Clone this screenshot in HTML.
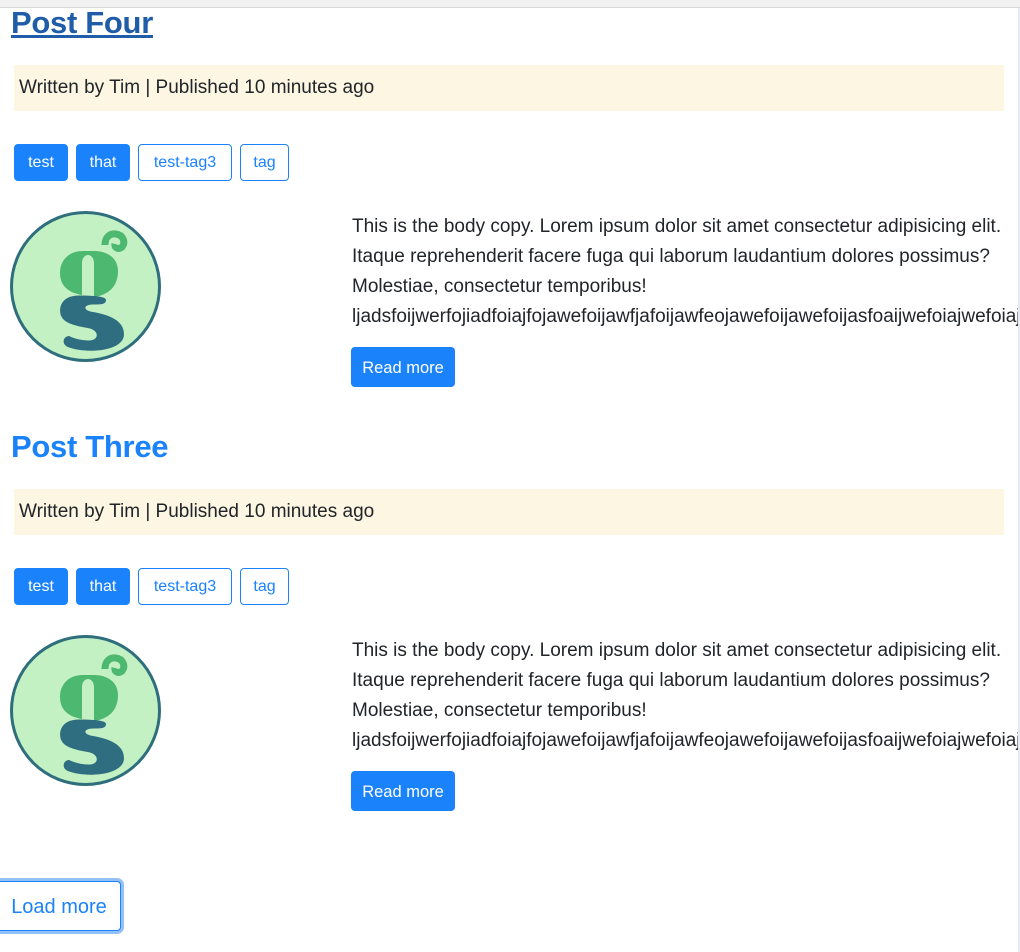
<!DOCTYPE html>
<html><head><style>
body{margin:0;width:1020px;height:952px;overflow:hidden;background:#fff;font-family:"Liberation Sans",sans-serif;color:#212529;position:relative}
.topbar{position:absolute;left:0;top:0;width:1020px;height:7px;background:#f1f1f1;border-bottom:1px solid #d8d8d8}
.rline{position:absolute;left:1018px;top:8px;width:2px;height:944px;background:#e3ecf4}
.post{position:absolute;left:0;width:1018px;height:424px}
h2{position:absolute;left:11px;top:4px;margin:0;font-size:31px;font-weight:bold;color:#1a82fb;line-height:38px;letter-spacing:-0.3px}
h2.u{color:#1f5da8;text-decoration:underline;text-decoration-thickness:3px}
.meta{position:absolute;left:14px;top:65px;width:985px;height:46px;background:#fcf6e3;font-size:19px;line-height:46px;padding-left:5px}
.tag{position:absolute;top:144px;height:37px;box-sizing:border-box;border-radius:4px;font-size:16px;line-height:35px;text-align:center;border:1px solid #1a82fb}
.f{background:#1a82fb;color:#fff}.o{background:#fff;color:#1a82fb}
.img{position:absolute;left:10px;top:211px}
.body{position:absolute;left:352px;top:212px;font-size:19px;line-height:30px;white-space:nowrap;width:666px;overflow:hidden}
.btn{position:absolute;left:351px;top:347px;width:104px;height:40px;background:#1a82fb;color:#fff;border-radius:4px;font-size:16.5px;line-height:42px;text-align:center}
.load{position:absolute;left:-3px;top:881px;width:122px;height:48px;border:1px solid #1a82fb;box-shadow:0 0 0 3px #94c0fa;border-radius:4px;color:#1a82fb;font-size:20px;line-height:50px;text-align:center;background:#fff}
</style></head><body>
<div class="topbar"></div><div class="rline"></div>

<div class="post" style="top:0">
<h2 class="u">Post Four</h2>
<div class="meta">Written by Tim | Published 10 minutes ago</div>
<div class="tag f" style="left:14px;width:54px">test</div>
<div class="tag f" style="left:76px;width:54px">that</div>
<div class="tag o" style="left:138px;width:94px">test-tag3</div>
<div class="tag o" style="left:240px;width:49px">tag</div>
<svg class="img" width="151" height="151" viewBox="0 0 151 151"><circle cx="75.5" cy="75.5" r="74" fill="#c4f1c3" stroke="#2f6f7d" stroke-width="3"/><path d="M73 40C58 40 50 50 50 62c0 14 10 20 22 22V52c0-5 3-8 6-8s6 3 6 8v34c14-2 24-10 24-26 0-14-12-20-24-20z" fill="#4db870"/><path d="M95 34c0-8 5-12 11-11 7 1 10 8 6 13-3 3-8 1-7-3" fill="none" stroke="#4db870" stroke-width="7"/><path transform="translate(6,8) scale(0.9)" d="M70 85c-15 0-21 8-21 17 0 12 12 16 30 19 14 2 14 14 2 14-8 0-16-2-22-5-6 0-9 8-2 12 18 8 63 6 63-14 0-16-18-22-36-25-10-2-9-8 2-8 8 0 14 0 14-5 0-4-14-5-30-5z" fill="#2e6e80"/></svg>
<div class="body">This is the body copy. Lorem ipsum dolor sit amet consectetur adipisicing elit.<br>Itaque reprehenderit facere fuga qui laborum laudantium dolores possimus?<br>Molestiae, consectetur temporibus!<br>ljadsfoijwerfojiadfoiajfojawefoijawfjafoijawfeojawefoijawefoijasfoaijwefoiajwefoiajwef</div>
<div class="btn">Read more</div>
</div>

<div class="post" style="top:424px">
<h2>Post Three</h2>
<div class="meta">Written by Tim | Published 10 minutes ago</div>
<div class="tag f" style="left:14px;width:54px">test</div>
<div class="tag f" style="left:76px;width:54px">that</div>
<div class="tag o" style="left:138px;width:94px">test-tag3</div>
<div class="tag o" style="left:240px;width:49px">tag</div>
<svg class="img" width="151" height="151" viewBox="0 0 151 151"><circle cx="75.5" cy="75.5" r="74" fill="#c4f1c3" stroke="#2f6f7d" stroke-width="3"/><path d="M73 40C58 40 50 50 50 62c0 14 10 20 22 22V52c0-5 3-8 6-8s6 3 6 8v34c14-2 24-10 24-26 0-14-12-20-24-20z" fill="#4db870"/><path d="M95 34c0-8 5-12 11-11 7 1 10 8 6 13-3 3-8 1-7-3" fill="none" stroke="#4db870" stroke-width="7"/><path transform="translate(6,8) scale(0.9)" d="M70 85c-15 0-21 8-21 17 0 12 12 16 30 19 14 2 14 14 2 14-8 0-16-2-22-5-6 0-9 8-2 12 18 8 63 6 63-14 0-16-18-22-36-25-10-2-9-8 2-8 8 0 14 0 14-5 0-4-14-5-30-5z" fill="#2e6e80"/></svg>
<div class="body">This is the body copy. Lorem ipsum dolor sit amet consectetur adipisicing elit.<br>Itaque reprehenderit facere fuga qui laborum laudantium dolores possimus?<br>Molestiae, consectetur temporibus!<br>ljadsfoijwerfojiadfoiajfojawefoijawfjafoijawfeojawefoijawefoijasfoaijwefoiajwefoiajwef</div>
<div class="btn">Read more</div>
</div>

<div class="load">Load more</div>
</body></html>
